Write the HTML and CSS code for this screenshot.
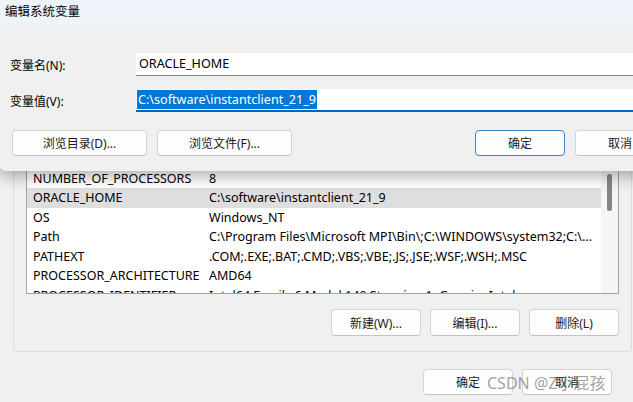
FILE: index.html
```html
<!DOCTYPE html>
<html lang="zh-CN">
<head>
    <meta charset="UTF-8">
    <title>编辑系统变量</title>
    <link rel="stylesheet" href="styles.css">
</head>
<body>

    <!-- Environment variables window (behind) -->
    <div class="env-window">
        <div class="group-box">
            <div class="var-list">
                <div class="list-rows">
                    <div class="list-head"><span class="col-name">变量</span><span>值</span></div>
                    <div class="row"><span class="col-name">ComSpec</span><span>C:\WINDOWS\system32\cmd.exe</span></div>
                    <div class="row"><span class="col-name">DriverData</span><span>C:\Windows\System32\Drivers\DriverData</span></div>
                    <div class="row"><span class="col-name">NUMBER_OF_PROCESSORS</span><span>8</span></div>
                    <div class="row row-selected"><span class="col-name">ORACLE_HOME</span><span>C:\software\instantclient_21_9</span></div>
                    <div class="row"><span class="col-name">OS</span><span>Windows_NT</span></div>
                    <div class="row"><span class="col-name">Path</span><span>C:\Program Files\Microsoft MPI\Bin\;C:\WINDOWS\system32;C:\...</span></div>
                    <div class="row"><span class="col-name">PATHEXT</span><span>.COM;.EXE;.BAT;.CMD;.VBS;.VBE;.JS;.JSE;.WSF;.WSH;.MSC</span></div>
                    <div class="row"><span class="col-name">PROCESSOR_ARCHITECTURE</span><span>AMD64</span></div>
                    <div class="row"><span class="col-name">PROCESSOR_IDENTIFIER</span><span>Intel64 Family 6 Model 140 Stepping 1, GenuineIntel</span></div>
                </div>
                <div class="scroll-track"><div class="scroll-thumb"></div></div>
            </div>
            <div class="button-row">
                <button class="win-button">新建(W)...</button>
                <button class="win-button">编辑(I)...</button>
                <button class="win-button">删除(L)</button>
            </div>
        </div>
        <div class="button-row footer-row">
            <button class="win-button">确定</button>
            <button class="win-button">取消</button>
        </div>
    </div>

    <!-- Edit system variable dialog (on top) -->
    <div class="edit-dialog">
        <div class="title-bar">编辑系统变量</div>
        <div class="dialog-body">
            <div class="field-row">
                <label class="field-label">变量名(N):</label>
                <div class="text-input">ORACLE_HOME</div>
            </div>
            <div class="field-row">
                <label class="field-label">变量值(V):</label>
                <div class="text-input input-focused"><span class="selection">C:\software\instantclient_21_9</span></div>
            </div>
            <div class="dialog-buttons">
                <button class="win-button wide">浏览目录(D)...</button>
                <button class="win-button wide">浏览文件(F)...</button>
                <button class="win-button default-button push-right">确定</button>
                <button class="win-button">取消</button>
            </div>
        </div>
    </div>

    <div class="watermark">CSDN @Z小屁孩</div>

</body>
</html>
```

FILE: styles.css
```css
/* Base */
body {
    margin: 0;
    width: 633px;
    height: 402px;
    overflow: hidden;
    background-color: #f0f0f0;
    font-family: "Noto Sans", "Noto Sans CJK SC", sans-serif;
    font-size: 12px;
    color: #000;
    position: relative;
}

/* Background window */
.env-window {
    padding-top: 62px;
}

.group-box {
    margin-left: 13px;
    width: 619px;
    box-sizing: border-box;
    border: 1px solid #dcdcdc;
    border-radius: 3px;
    padding: 43px 12px 15px 12px;
}

.var-list {
    display: flex;
    height: 188px;
    box-sizing: border-box;
    border: 1px solid #a3a3a3;
    background-color: #fff;
    overflow: hidden;
}

.list-rows {
    flex: 1;
    min-width: 0;
    overflow: hidden;
    font-size: 12.5px;
}

.list-head {
    display: flex;
    height: 22.5px;
    line-height: 22px;
    padding-left: 6px;
    border-bottom: 1px solid #e5e5e5;
    box-sizing: border-box;
}

.row {
    display: flex;
    height: 19.5px;
    line-height: 19.5px;
    padding-left: 6px;
    white-space: nowrap;
}

.row-selected {
    background-color: #dedede;
}

.col-name {
    width: 176px;
    flex-shrink: 0;
}

.scroll-track {
    width: 17px;
    flex-shrink: 0;
    background-color: #f5f5f5;
    padding: 67px 0 0 6px;
    box-sizing: border-box;
}

.scroll-thumb {
    width: 5px;
    height: 37px;
    border-radius: 3px;
    background-color: #858585;
}

.button-row {
    display: flex;
    justify-content: flex-end;
    gap: 9px;
    margin-top: 15px;
}

.footer-row {
    margin-top: 17px;
    margin-right: 21px;
}

.win-button {
    width: 90px;
    height: 27px;
    padding: 0;
    background-color: #fdfdfd;
    border: 1px solid #d4d4d4;
    border-bottom-color: #c2c2c2;
    border-radius: 4px;
    font-family: "Noto Sans", "Noto Sans CJK SC", sans-serif;
    font-size: 12px;
    color: #1a1a1a;
}

.footer-row .win-button {
    height: 26px;
}

/* Edit dialog */
.edit-dialog {
    position: absolute;
    top: 0;
    left: -1px;
    width: 720px;
    height: 171px;
    background-color: #f0f0f0;
    border-radius: 0 0 8px 8px;
    box-shadow: 0 5px 16px rgba(0, 0, 0, 0.32);
    overflow: hidden;
}

.title-bar {
    height: 27px;
    line-height: 24px;
    padding-left: 6px;
    font-size: 12.5px;
    background-color: #eef2f9;
}

.dialog-body {
    padding: 26px 0 0 11px;
}

.field-row {
    display: flex;
    align-items: center;
    margin-bottom: 13px;
}

.field-label {
    width: 126px;
}

.text-input {
    width: 580px;
    height: 23px;
    box-sizing: border-box;
    background-color: #fff;
    border-bottom: 1px solid #868686;
    padding-left: 3px;
    font-size: 12.6px;
    line-height: 22px;
    white-space: nowrap;
}

.input-focused {
    border-bottom: 2px solid #0067c0;
    line-height: 21px;
}

.selection {
    display: inline-block;
    height: 19px;
    line-height: 19px;
    padding: 0 1px;
    margin-left: -2px;
    background-color: #0078d7;
    color: #fff;
}

.dialog-buttons {
    display: flex;
    gap: 10px;
    margin-top: 18px;
    padding-left: 2px;
}

.dialog-buttons .win-button {
    height: 26px;
}

.win-button.wide {
    width: 135px;
}

.default-button {
    border-color: #3a86d0;
}

.push-right {
    margin-left: 173px;
}

/* Watermark overlay */
.watermark {
    position: absolute;
    left: 487px;
    top: 372px;
    font-size: 16px;
    line-height: 22px;
    color: rgba(110, 110, 110, 0.65);
    white-space: nowrap;
}
```
